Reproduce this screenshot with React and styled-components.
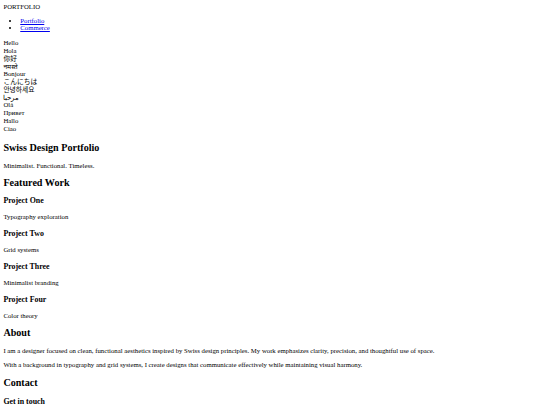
import React from 'react'
import styled, { createGlobalStyle } from 'styled-components'

// the page is a bare, browser-default document shown at 1280px and scaled down
const SCALE = 0.421875
const px = v => `${v * SCALE}px`

const GlobalStyle = createGlobalStyle`
  html {
    font-size: ${px(16)};
  }
  body {
    margin: ${px(8)};
    background: #ffffff;
    color: #000000;
    font-family: "Liberation Serif", "Noto Sans CJK SC", "Noto Sans", serif;
    font-size: 1rem;
    line-height: normal;
  }
`

const Logo = styled.div``

const NavList = styled.ul`
  margin: 1em 0;
  padding-left: 2.5em;
  list-style: disc;
`

const NavLink = styled.a`
  color: #0000ee;
  text-decoration: underline;
`

const Greetings = styled.div`
  padding: 1.5px 0;
`

const Greeting = styled.div`
  height: ${px(18.4)};
  line-height: ${px(18.4)};
  white-space: nowrap;
`

const Title = styled.h1`
  font-size: 1.5em;
  font-weight: bold;
  margin: 0.83em 0;
`

const SectionTitle = styled.h2`
  font-size: 1.5em;
  font-weight: bold;
  margin: 0.83em 0;
`

const ItemTitle = styled.h3`
  font-size: 1.17em;
  font-weight: bold;
  margin: ${p => p.$top || '1em'} 0 1em;
`

const Text = styled.p`
  margin: 1em 0;
`

const Project = styled.article`
  margin-bottom: ${px(21)};
`

const Section = styled.section`
  margin-bottom: ${p => p.$gap || 0}px;
`

const greetings = ['Hello', 'Hola', '你好', 'नमस्ते', 'Bonjour', 'こんにちは', '안녕하세요', 'مرحبا', 'Olá', 'Привет', 'Hallo', 'Ciao']

const projects = [
  ['Project One', 'Typography exploration'],
  ['Project Two', 'Grid systems'],
  ['Project Three', 'Minimalist branding'],
  ['Project Four', 'Color theory'],
]

export default function App() {
  return (
    <>
      <GlobalStyle />
      <header>
        <Logo>PORTFOLIO</Logo>
        <nav>
          <NavList>
            <li><NavLink href="#">Portfolio</NavLink></li>
            <li><NavLink href="#">Commerce</NavLink></li>
          </NavList>
        </nav>
      </header>
      <Greetings>
        {greetings.map(g => <Greeting key={g}>{g}</Greeting>)}
      </Greetings>
      <Section>
        <Title>Swiss Design Portfolio</Title>
        <Text>Minimalist. Functional. Timeless.</Text>
      </Section>
      <Section>
        <SectionTitle>Featured Work</SectionTitle>
        {projects.map(([name, desc]) => (
          <Project key={name}>
            <ItemTitle>{name}</ItemTitle>
            <Text>{desc}</Text>
          </Project>
        ))}
      </Section>
      <Section $gap={9.5}>
        <SectionTitle>About</SectionTitle>
        <Text>I am a designer focused on clean, functional aesthetics inspired by Swiss design principles. My work emphasizes clarity, precision, and thoughtful use of space.</Text>
        <Text>With a background in typography and grid systems, I create designs that communicate effectively while maintaining visual harmony.</Text>
      </Section>
      <Section>
        <SectionTitle>Contact</SectionTitle>
        <ItemTitle $top="1.12em">Get in touch</ItemTitle>
      </Section>
    </>
  )
}
